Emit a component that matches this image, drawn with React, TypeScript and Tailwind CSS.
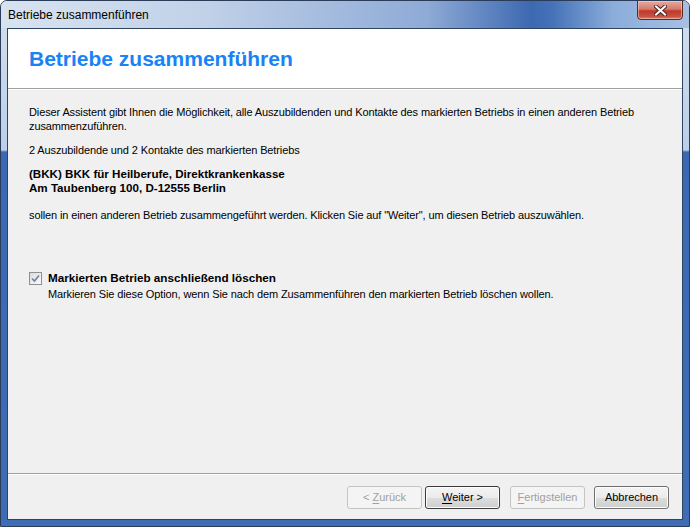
export default function App() {
  return (
    <div className="flex h-[527px] w-[690px] flex-col overflow-hidden rounded-t-[7px] border border-[#2a3c58] bg-[linear-gradient(to_bottom,#d3dfee_0px,#bccfe7_149px,#3a68b2_151px,#3e6cb5_100%)] font-['Liberation_Sans',Arial,sans-serif]">
      <TitleBar />
      <div className="mx-[6px] mb-[6px] flex flex-1 flex-col border border-[#2f4362] bg-[#f0f0f0]">
        <div className="flex h-[59px] items-center bg-white pl-[21px]">
          <h1 className="text-[21px] font-bold leading-none text-[#1a82f7]">
            Betriebe zusammenführen
          </h1>
        </div>
        <div className="h-px bg-[#a0a0a0]" />
        <div className="h-px bg-white" />

        <div className="flex-1 pl-[21px] pt-[15px] text-[11px] leading-[14px] tracking-[-0.12px] text-black">
          <p>
            Dieser Assistent gibt Ihnen die Möglichkeit, alle Auszubildenden und
            Kontakte des markierten Betriebs in einen anderen Betrieb
            <br />
            zusammenzuführen.
          </p>
          <p className="mt-[10px]">
            2 Auszubildende und 2 Kontakte des markierten Betriebs
          </p>
          <p className="mt-[10px] text-[11.6px] font-bold tracking-normal">
            (BKK) BKK für Heilberufe, Direktkrankenkasse
            <br />
            Am Taubenberg 100, D-12555 Berlin
          </p>
          <p className="mt-[13px]">
            sollen in einen anderen Betrieb zusammengeführt werden. Klicken Sie
            auf "Weiter", um diesen Betrieb auszuwählen.
          </p>

          <div className="mt-[49px] flex items-start gap-[6px]">
            <Checkbox />
            <div>
              <p className="text-[11.7px] font-bold tracking-normal">
                Markierten Betrieb anschließend löschen
              </p>
              <p className="mt-[2px]">
                Markieren Sie diese Option, wenn Sie nach dem Zusammenführen den
                markierten Betrieb löschen wollen.
              </p>
            </div>
          </div>
        </div>

        <div className="h-px bg-[#a0a0a0]" />
        <div className="h-px bg-white" />
        <div className="flex h-[44px] items-start justify-end pr-[13px] pt-[11px] text-[11px]">
          <WizardButton disabled mnemonic="Z" before="< " after="urück" />
          <WizardButton focused className="ml-[3px]" mnemonic="W" after="eiter >" />
          <WizardButton disabled className="ml-[10px]" mnemonic="F" after="ertigstellen" />
          <WizardButton className="ml-[9px]" after="Abbrechen" />
        </div>
      </div>
    </div>
  );
}

function TitleBar() {
  return (
    <div className="relative flex h-[27px] items-start bg-[linear-gradient(to_right,#d8e3f0_0%,#c0d1e8_30%,#8eaad6_62%,#3d69b1_77%,#4471b7_80%,#8badda_89%,#a6c0e3_100%)]">
      <span className="pl-[7px] pt-[7px] text-[12px] leading-[14px] text-black">
        Betriebe zusammenführen
      </span>
      <div className="absolute right-[6px] top-[-1px] flex h-[20px] w-[46px] items-center justify-center rounded-b-[4px] border border-[#5a2a24] bg-[linear-gradient(to_bottom,#e6aa9e_0%,#d47c6c_45%,#c0392b_55%,#c65140_85%,#d9826a_100%)] shadow-[inset_0_0_0_1px_rgba(255,220,210,0.5)]">
        <svg width="13" height="11" viewBox="0 0 13 11">
          <path
            d="M2 1.5 L11 9.5 M11 1.5 L2 9.5"
            stroke="#4a2a28"
            strokeWidth="4"
            strokeLinecap="square"
          />
          <path
            d="M2 1.5 L11 9.5 M11 1.5 L2 9.5"
            stroke="#ffffff"
            strokeWidth="2"
            strokeLinecap="square"
          />
        </svg>
      </div>
    </div>
  );
}

function Checkbox() {
  return (
    <div className="mt-[1px] flex h-[13px] w-[13px] shrink-0 items-center justify-center border border-[#8e8f8f] bg-[linear-gradient(135deg,#dcdcdc,#fbfbfb)]">
      <svg width="9" height="9" viewBox="0 0 9 9">
        <path
          d="M1 4.5 L3.5 7 L8 1.5"
          fill="none"
          stroke="#6f7fa8"
          strokeWidth="1.6"
        />
      </svg>
    </div>
  );
}

function WizardButton({
  before,
  mnemonic,
  after,
  disabled,
  focused,
  className = "",
}: {
  before?: string;
  mnemonic?: string;
  after: string;
  disabled?: boolean;
  focused?: boolean;
  className?: string;
}) {
  const base =
    "flex h-[23px] w-[75px] items-center justify-center rounded-[3px] border leading-none";
  const look = disabled
    ? "border-[#c4c4c4] bg-[#f4f4f4] text-[#a0a0a0]"
    : focused
      ? "border-[#3c3c3c] bg-[linear-gradient(to_bottom,#f4f4f4_0%,#ebebeb_50%,#dddddd_51%,#cfcfcf_100%)] text-black shadow-[inset_0_0_0_1px_#fcfcfc]"
      : "border-[#707070] bg-[linear-gradient(to_bottom,#f4f4f4_0%,#ebebeb_50%,#dddddd_51%,#cfcfcf_100%)] text-black shadow-[inset_0_0_0_1px_#fcfcfc]";
  return (
    <div className={`${base} ${look} ${className}`}>
      <span>
        {before}
        {mnemonic && <span className="underline underline-offset-2">{mnemonic}</span>}
        {after}
      </span>
    </div>
  );
}
